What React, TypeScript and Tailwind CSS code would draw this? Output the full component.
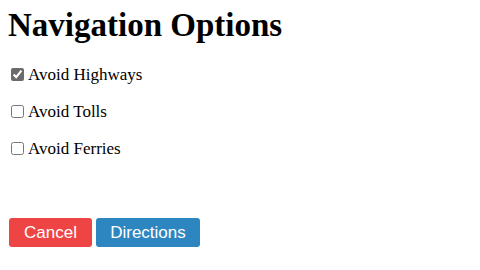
import React, { useState } from "react";

const serif = { fontFamily: '"Liberation Serif", "Times New Roman", serif' };

export default function App() {
  const [opts, setOpts] = useState({ highways: true, tolls: false, ferries: false });

  const rows: { key: keyof typeof opts; label: string }[] = [
    { key: "highways", label: "Avoid Highways" },
    { key: "tolls", label: "Avoid Tolls" },
    { key: "ferries", label: "Avoid Ferries" },
  ];

  return (
    <div className="h-[270px] w-[480px] bg-white px-2 pt-[6px] text-black" style={serif}>
      <h1 className="text-[33px] font-bold leading-[38px]">Navigation Options</h1>
      <div className="mt-[21px] flex flex-col gap-[18px]">
        {rows.map((r) => (
          <label key={r.key} className="flex h-[19px] items-center text-[17px] leading-[19px]">
            <input
              type="checkbox"
              checked={opts[r.key]}
              onChange={() => setOpts({ ...opts, [r.key]: !opts[r.key] })}
              className="ml-[3px] mr-1 h-[13px] w-[13px] accent-[#6b6b6b]"
            />
            {r.label}
          </label>
        ))}
      </div>
      <div className="mt-[60px] flex gap-1 pl-px" style={{ fontFamily: '"Liberation Sans", Arial, sans-serif' }}>
        <button className="h-[29px] w-[83px] rounded-[3px] bg-[#ef4444] text-[17px] text-white">Cancel</button>
        <button className="h-[29px] w-[104px] rounded-[3px] bg-[#2e86c1] text-[17px] text-white">Directions</button>
      </div>
    </div>
  );
}
